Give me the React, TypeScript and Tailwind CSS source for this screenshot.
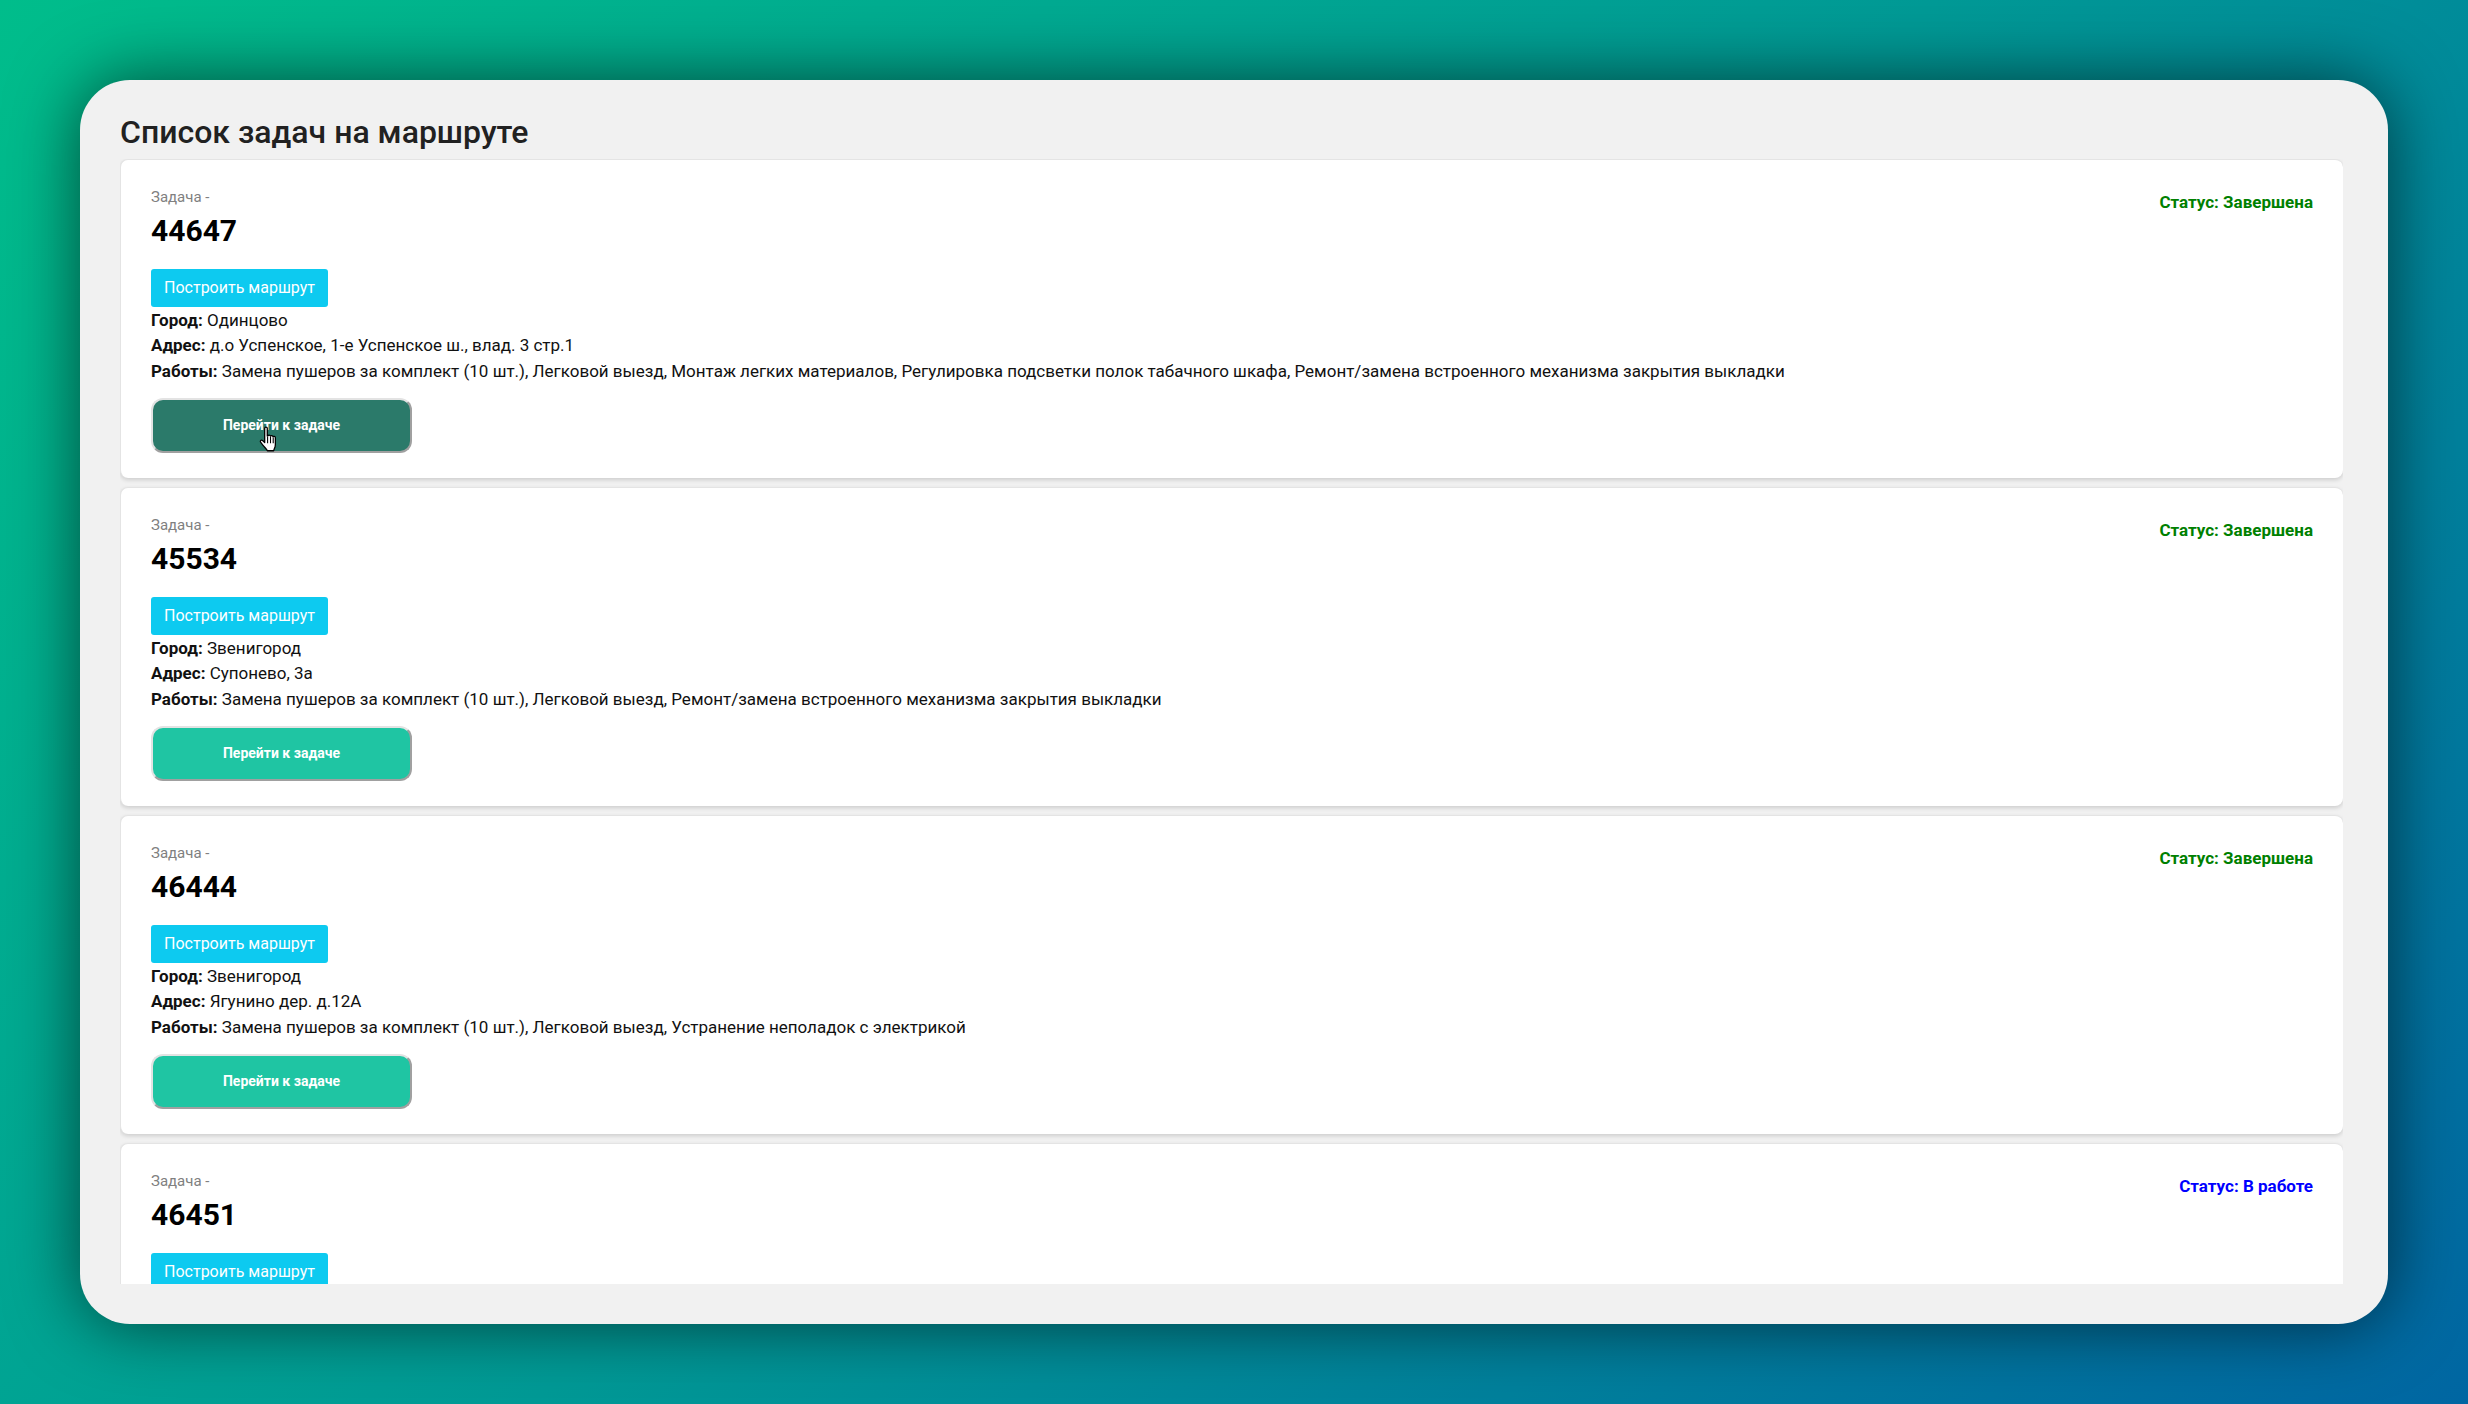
import React from 'react';

const tasks = [
  {
    id: '44647',
    city: 'Одинцово',
    address: 'д.о Успенское, 1-е Успенское ш., влад. 3 стр.1',
    works: 'Замена пушеров за комплект (10 шт.), Легковой выезд, Монтаж легких материалов, Регулировка подсветки полок табачного шкафа, Ремонт/замена встроенного механизма закрытия выкладки',
    status: 'Завершена',
    hover: true,
  },
  {
    id: '45534',
    city: 'Звенигород',
    address: 'Супонево, 3а',
    works: 'Замена пушеров за комплект (10 шт.), Легковой выезд, Ремонт/замена встроенного механизма закрытия выкладки',
    status: 'Завершена',
  },
  {
    id: '46444',
    city: 'Звенигород',
    address: 'Ягунино дер. д.12А',
    works: 'Замена пушеров за комплект (10 шт.), Легковой выезд, Устранение неполадок с электрикой',
    status: 'Завершена',
  },
  {
    // the list is cut off under the route button here
    id: '46451',
    status: 'В работе',
  },
];

type Task = {
  id: string;
  city?: string;
  address?: string;
  works?: string;
  status: string;
  hover?: boolean;
};

const HandCursor = () => (
  <svg className="absolute left-[106px] top-[26px]" width="20" height="28" viewBox="0 0 18 26">
    <path
      d="M5 2.2c0-1.6 2.4-1.6 2.4 0v7.2l.6-.2c.3-1 2.1-1 2.4.2.5-.8 2.1-.6 2.3.5.6-.6 2.2-.2 2.2 1v6.4c0 1.6-.4 2.700-1 3.900l-.6 1.800H7.500c-.8-1.600-2.400-3-4.200-5.300L1.200 15c-.8-1.200.6-2.500 1.800-1.600l2 1.900V2.200z"
      fill="#fff"
      stroke="#000"
      strokeWidth="1.200"
      strokeLinejoin="round"
    />
    <path d="M7.700 10v6M10.400 10v6M12.900 10.500V16" stroke="#000" strokeWidth="1" fill="none" />
  </svg>
);

const TaskCard = ({ task }: { task: Task }) => (
  <div className="shrink-0 h-[319px] rounded-[8px] border border-[#e4e4e4] border-r-0 border-b-0 bg-white pt-[27px] pl-[30px] pr-[30px] shadow-[0_2px_4px_rgba(0,0,0,0.15)]">
    <div className="flex justify-between">
      <div>
        <div className="text-[15px] leading-[20px] text-[#808080]">Задача -</div>
        <div className="mt-[4px] text-[30px] leading-[40px] font-bold text-black">{task.id}</div>
      </div>
      <div className={`mt-[3px] text-[17px] leading-[24px] font-bold ${task.status === 'В работе' ? 'text-[#0000ff]' : 'text-[#008000]'}`}>
        Статус: {task.status}
      </div>
    </div>
    <button className="mt-[18px] block h-[38px] w-[177px] rounded-[3px] bg-[#0dcaf0] text-[16px] text-white">
      Построить маршрут
    </button>
    {task.city && (
      <>
        <div className="mt-[0.5px] text-[17px] leading-[25.6px] text-[#111]">
          <div><b className="font-bold">Город:</b> {task.city}</div>
          <div><b className="font-bold">Адрес:</b> {task.address}</div>
          <div><b className="font-bold">Работы:</b> {task.works}</div>
        </div>
        <button
          className={`relative mt-[13.5px] block h-[55px] w-[261px] rounded-[12px] border-2 border-t-[#e3e3e3] border-l-[#e3e3e3] border-r-[#a0a0a0] border-b-[#a0a0a0] text-[14px] font-bold text-white ${task.hover ? 'bg-[#2b7a6a]' : 'bg-[#1fc5a3]'}`}
        >
          Перейти к задаче
          {task.hover && <HandCursor />}
        </button>
      </>
    )}
  </div>
);

export default function App() {
  return (
    <div
      className="h-screen w-full bg-[linear-gradient(135deg,#00bd8b_0%,#009a96_50%,#0066a2_100%)] p-[80px]"
      style={{ fontFamily: 'Roboto, sans-serif' }}
    >
      <div className="flex h-full flex-col rounded-[50px] bg-[#f1f1f1] pt-[28px] pr-[45px] pb-[40px] pl-[40px] shadow-[0_0_70px_rgba(0,0,0,0.6)]">
        <h1 className="h-[51px] shrink-0 text-[32px] leading-[48px] font-medium text-[#212121]">Список задач на маршруте</h1>
        <div className="flex min-h-0 flex-1 flex-col gap-[9px] overflow-hidden">
          {tasks.map((task) => (
            <TaskCard key={task.id} task={task} />
          ))}
        </div>
      </div>
    </div>
  );
}
